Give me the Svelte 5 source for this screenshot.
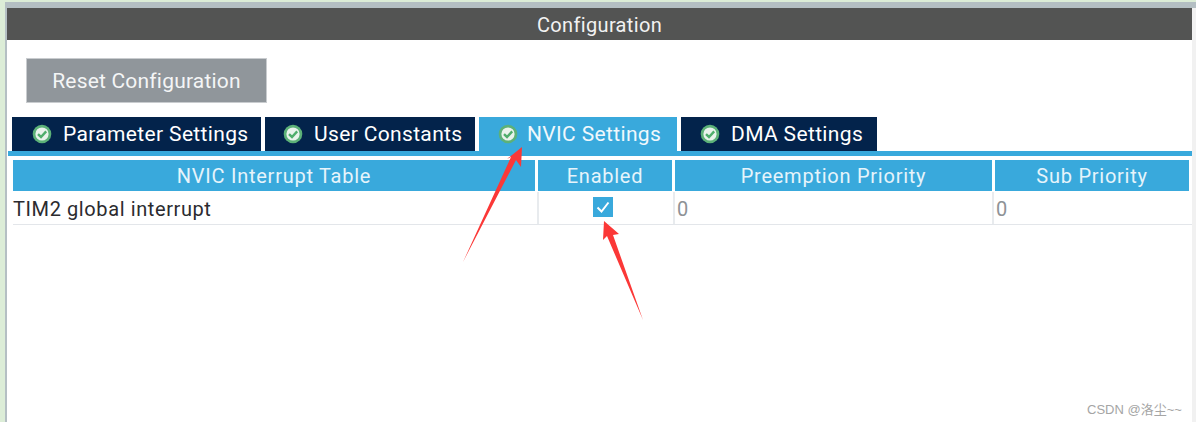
<script>
  const tabs = [
    { label: 'Parameter Settings', w: 249 },
    { label: 'User Constants', w: 210 },
    { label: 'NVIC Settings', w: 198, active: true },
    { label: 'DMA Settings', w: 196 }
  ];
  const cols = [
    { label: 'NVIC Interrupt Table', w: 522 },
    { label: 'Enabled', w: 134 },
    { label: 'Preemption Priority', w: 317 },
    { label: 'Sub Priority', w: 194 }
  ];
</script>

<div class="page">
  <div class="frame">
    <div class="panel">
      <header class="title">Configuration</header>
      <div class="toolbar">
        <button class="reset">Reset Configuration</button>
      </div>
      <nav class="tabs">
        {#each tabs as t}
          <div class="tab" class:active={t.active} style="width:{t.w}px">
            <svg class="ok" viewBox="0 0 20 20" width="20" height="20">
              <circle cx="10" cy="10" r="9.3" fill="#5cb178" />
              <circle cx="10" cy="10" r="6.6" fill="#e9f3ec" />
              <path d="M6 10.2 L9 13 L14.2 7.4" fill="none" stroke="#4fae6c" stroke-width="2.4" />
            </svg>
            <span>{t.label}</span>
          </div>
        {/each}
      </nav>
      <div class="rule"></div>
      <div class="table">
        <div class="thead">
          {#each cols as c}
            <div class="th" style="width:{c.w}px">{c.label}</div>
          {/each}
        </div>
        <div class="tbody">
          <div class="td name" style="width:{cols[0].w}px">TIM2 global interrupt</div>
          <div class="td center" style="width:{cols[1].w}px">
            <span class="check">
              <svg viewBox="0 0 20 20" width="20" height="20">
                <path d="M4.5 10.5 L8.5 14.5 L15.5 5.5" fill="none" stroke="#fff" stroke-width="2" />
              </svg>
            </span>
          </div>
          <div class="td num" style="width:{cols[2].w}px">0</div>
          <div class="td num" style="width:{cols[3].w}px">0</div>
        </div>
      </div>
    </div>
  </div>
  <svg class="arrows" viewBox="0 0 1196 422" width="1196" height="422">
    <polygon fill="#fb3837" points="522,147 521,167 516,160 463,262 511,157 507,159" />
    <polygon fill="#fb3837" points="604,221 619,234 613,235 643,320 607,236 603,240" />
  </svg>
  <div class="mark">CSDN @洛尘~~</div>
</div>

<style>
  :global(body) {
    margin: 0;
  }
  .page {
    position: relative;
    width: 1196px;
    height: 422px;
    overflow: hidden;
    background: #dcedd7;
    padding: 2px 0 0 5px;
    box-sizing: border-box;
    font-family: Roboto, 'Liberation Sans', sans-serif;
  }
  .frame {
    height: 100%;
    background: #b4bfc3;
    padding: 6px 0 0 2px;
    box-sizing: border-box;
  }
  .panel {
    height: 100%;
    background: #fff;
    border-right: 4px solid #f1f1f1;
    box-sizing: border-box;
  }
  .title {
    height: 32px;
    background: #535453;
    color: #f2f2f2;
    font-size: 20px;
    line-height: 35px;
    text-align: center;
    letter-spacing: 0.35px;
  }
  .toolbar {
    padding: 18px 0 0 19px;
  }
  .reset {
    display: block;
    width: 241px;
    height: 45px;
    background: #90969b;
    border: 1px solid #c9cccf;
    color: #f4f5f6;
    font: inherit;
    font-size: 21px;
    letter-spacing: 0.2px;
    padding: 0;
  }
  .tabs {
    display: flex;
    gap: 4px;
    margin: 14px 0 0 5px;
    height: 34px;
  }
  .tab {
    display: flex;
    align-items: center;
    gap: 11px;
    padding-left: 19px;
    box-sizing: border-box;
    background: #03234b;
    color: #fff;
    font-size: 21px;
    letter-spacing: 0.35px;
  }
  .tab:first-child {
    padding-left: 20px;
  }
  .tab:nth-child(2) {
    padding-left: 18px;
  }
  .tab.active {
    background: #39a9dc;
    color: #f0f8fc;
    gap: 9px;
  }
  .rule {
    height: 5px;
    margin: 0 0 0 1px;
    background: #39a9dc;
  }
  .table {
    margin: 4px 0 0 6px;
  }
  .thead {
    display: flex;
    gap: 3px;
  }
  .th {
    height: 31px;
    line-height: 33px;
    background: #39a9dc;
    color: #e6f4fb;
    font-size: 20px;
    letter-spacing: 0.75px;
    text-align: center;
  }
  .tbody {
    display: flex;
    gap: 3px;
    height: 32px;
    border-bottom: 1px solid #e3e6ea;
    margin-top: 1px;
  }
  .td {
    box-sizing: border-box;
    height: 32px;
    line-height: 35px;
    font-size: 20px;
    color: #2b2b2f;
    letter-spacing: 0.6px;
  }
  .td + .td {
    border-left: 2px solid #e8ebee;
    margin-left: -1px;
    padding-left: 2px;
  }
  .num {
    color: #8e9296;
  }
  .center {
    display: flex;
    justify-content: center;
    align-items: center;
  }
  .check {
    display: block;
    width: 20px;
    height: 20px;
    background: #39a9dc;
    margin: -2px 6px 0 0;
  }
  .check svg {
    display: block;
  }
  .arrows {
    position: absolute;
    left: 0;
    top: 0;
    pointer-events: none;
  }
  .mark {
    position: absolute;
    left: 1087px;
    top: 399px;
    font-family: 'Liberation Sans', 'Noto Sans CJK SC', sans-serif;
    font-size: 13px;
    color: #a5a5a5;
    white-space: nowrap;
  }
</style>
